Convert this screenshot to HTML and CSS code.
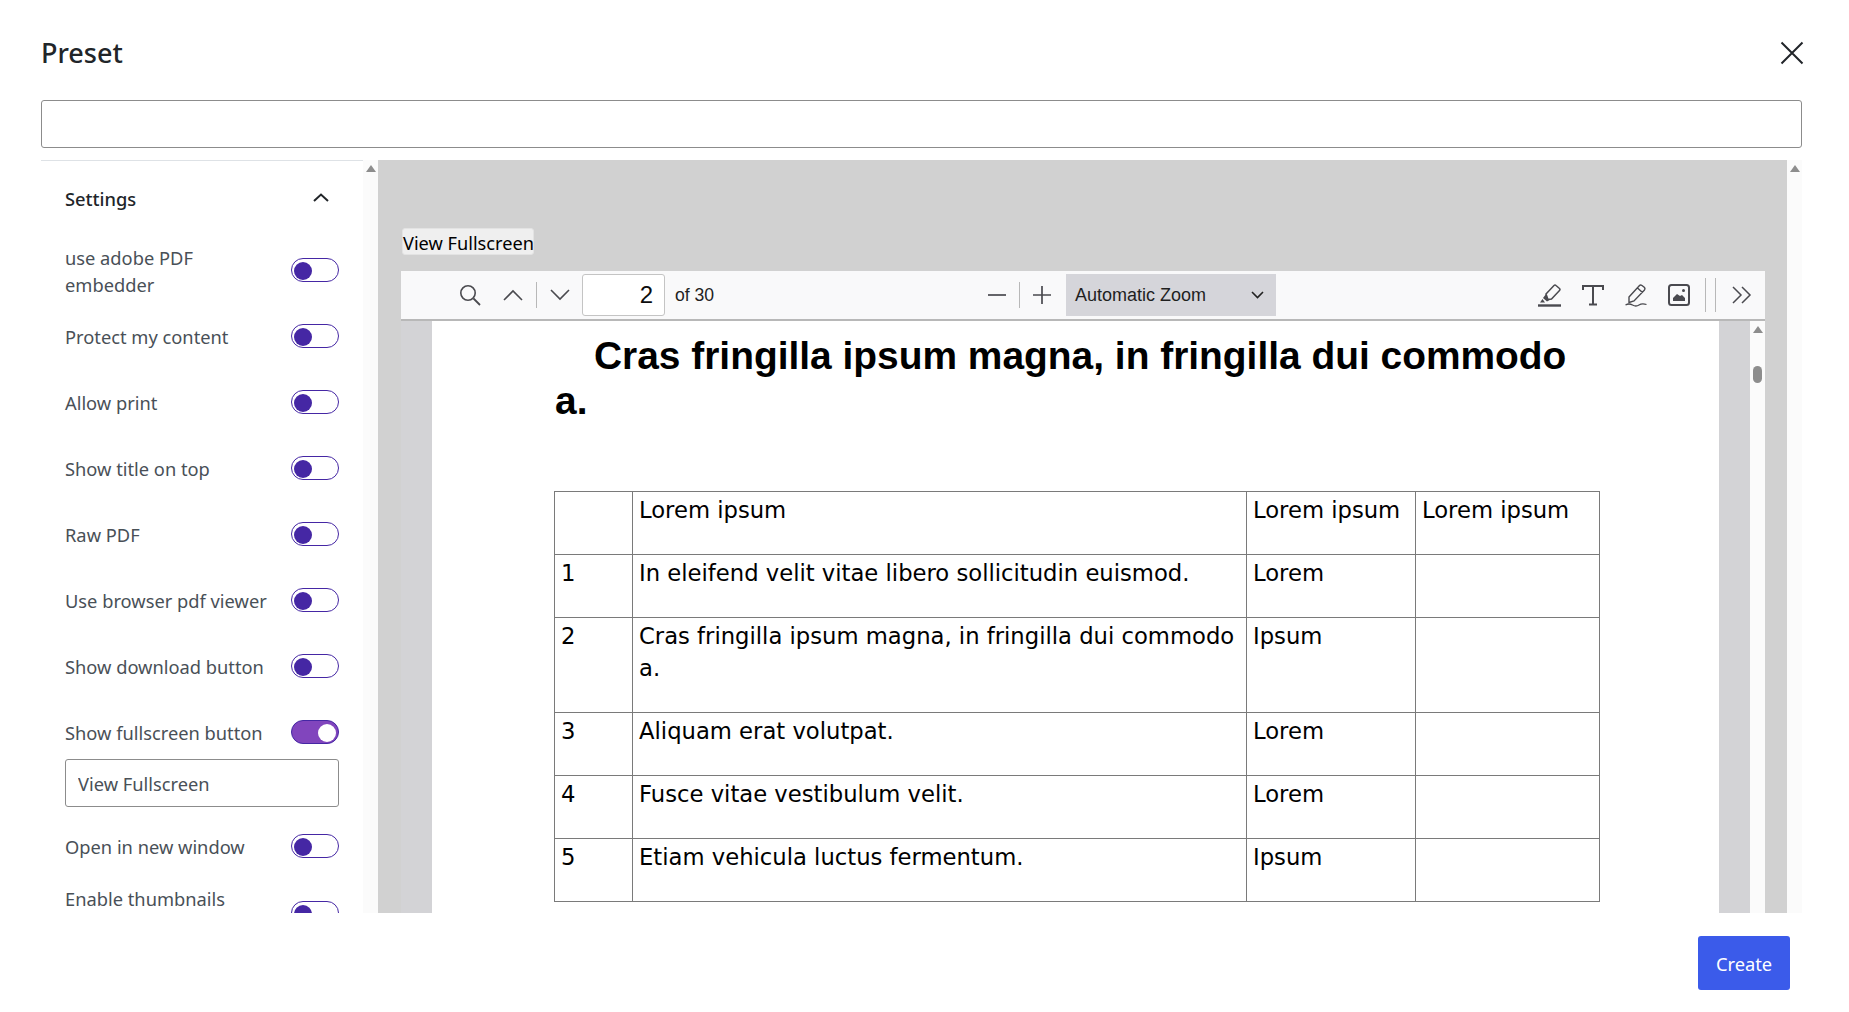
FILE: index.html
```html
<!DOCTYPE html>
<html lang="en">
<head>
    <meta charset="UTF-8">
    <title>Preset</title>
    <link rel="stylesheet" href="styles.css">
</head>
<body>
    <div id="modal">
        <div id="head">
            <h1>Preset</h1>
            <svg class="close" width="24" height="24" viewBox="0 0 24 24"><path d="M1.5 1.5 L22.5 22.5 M22.5 1.5 L1.5 22.5" stroke="#212529" stroke-width="2" fill="none"/></svg>
        </div>
        <input id="title" type="text">
        <div id="main">
            <div id="side">
                <div id="side-scroll">
                    <div id="settings-head">
                        <span>Settings</span>
                        <svg width="16" height="10" viewBox="0 0 16 10"><path d="M1 8 L8 1.5 L15 8" stroke="#212529" stroke-width="2" fill="none"/></svg>
                    </div>
                    <div class="row two"><label>use adobe PDF embedder</label><span class="toggle"></span></div>
                    <div class="row"><label>Protect my content</label><span class="toggle"></span></div>
                    <div class="row"><label>Allow print</label><span class="toggle"></span></div>
                    <div class="row"><label>Show title on top</label><span class="toggle"></span></div>
                    <div class="row"><label>Raw PDF</label><span class="toggle"></span></div>
                    <div class="row"><label>Use browser pdf viewer</label><span class="toggle"></span></div>
                    <div class="row"><label>Show download button</label><span class="toggle"></span></div>
                    <div class="row"><label>Show fullscreen button</label><span class="toggle on"></span></div>
                    <input class="text-input" type="text" value="View Fullscreen">
                    <div class="row"><label>Open in new window</label><span class="toggle"></span></div>
                    <div class="row last"><label>Enable thumbnails</label><span class="toggle"></span></div>
                </div>
                <div class="scrollbar"><i class="arrow"></i></div>
            </div>
            <div id="preview">
                <div id="preview-inner">
                    <button id="fullscreen">View Fullscreen</button>
                    <div id="viewer">
                        <div id="toolbar">
                            <svg class="tool search" width="24" height="24" viewBox="0 0 24 24"><circle cx="10" cy="10" r="7.2" stroke="#4a4a4f" stroke-width="1.6" fill="none"/><path d="M15.5 15.5 L22 22" stroke="#4a4a4f" stroke-width="1.8" fill="none"/></svg>
                            <svg class="tool up" width="20" height="12" viewBox="0 0 20 12"><path d="M1 11 L10 2 L19 11" stroke="#4a4a4f" stroke-width="1.6" fill="none"/></svg>
                            <span class="sep"></span>
                            <svg class="tool down" width="20" height="12" viewBox="0 0 20 12"><path d="M1 1 L10 10 L19 1" stroke="#4a4a4f" stroke-width="1.6" fill="none"/></svg>
                            <input id="page-no" type="text" value="2">
                            <span id="page-count">of 30</span>
                            <div class="zoom-group">
                                <svg width="18" height="18" viewBox="0 0 18 18"><path d="M0 9 H18" stroke="#4a4a4f" stroke-width="1.7"/></svg>
                                <span class="sep"></span>
                                <svg width="18" height="18" viewBox="0 0 18 18"><path d="M0 9 H18 M9 0 V18" stroke="#4a4a4f" stroke-width="1.7"/></svg>
                            </div>
                            <div id="zoom-select">
                                <span>Automatic Zoom</span>
                                <svg width="13" height="8" viewBox="0 0 13 8"><path d="M1 1 L6.5 6.5 L12 1" stroke="#222" stroke-width="1.6" fill="none"/></svg>
                            </div>
                            <div class="tools-right">
                                <svg width="23" height="24" viewBox="0 0 23 24"><path d="M8 11 L16 2.5 Q17 1.5 18 2.5 L21.5 5.5 Q22.5 6.5 21.5 7.5 L13.5 16 L10 16.5 Z" stroke="#4a4a4f" stroke-width="1.5" fill="none"/><path d="M8 11 L5 15 L9 18.5 L13.5 16 L10 16.5 Z M4.5 16 L2 19.5 H7 Z" fill="#4a4a4f"/><path d="M0 22.5 H23" stroke="#4a4a4f" stroke-width="2.4"/></svg>
                                <svg width="22" height="22" viewBox="0 0 22 22"><path d="M1 6 V2 H21 V6 M11 2 V20 M7 20.5 H15" stroke="#4a4a4f" stroke-width="2" fill="none"/></svg>
                                <svg width="22" height="24" viewBox="0 0 22 24"><path d="M4 14 L14.5 2.5 Q15.5 1.5 17 2.5 L19.5 4.5 Q20.5 6 19.5 7 L9 18 L4 19.5 Z M12.5 5 L17.5 9.5" stroke="#4a4a4f" stroke-width="1.4" fill="none"/><path d="M0.5 22 Q4 20 7.5 22 T14 22 T21.5 21.5" stroke="#4a4a4f" stroke-width="1.3" fill="none"/></svg>
                                <svg width="22" height="22" viewBox="0 0 22 22"><rect x="1" y="1" width="20" height="20" rx="2.5" stroke="#4a4a4f" stroke-width="2" fill="none"/><path d="M5 17 V14 L9 10 L12 12 L14 11 L17 14 V17 Z" fill="#4a4a4f"/><circle cx="15.5" cy="6.5" r="1.5" fill="#4a4a4f"/></svg>
                                <span class="sep tall"></span>
                                <span class="sep tall"></span>
                                <svg class="more" width="20" height="18" viewBox="0 0 20 18"><path d="M1 1 L9 9 L1 17 M10 1 L18 9 L10 17" stroke="#4a4a4f" stroke-width="1.5" fill="none"/></svg>
                            </div>
                        </div>
                        <div id="pages">
                            <div id="page">
                                <h2>Cras fringilla ipsum magna, in fringilla dui commodo a.</h2>
                                <table>
                                    <tr class="r63"><td class="c1"></td><td class="c2">Lorem ipsum</td><td class="c3">Lorem ipsum</td><td>Lorem ipsum</td></tr>
                                    <tr class="r63"><td>1</td><td>In eleifend velit vitae libero sollicitudin euismod.</td><td>Lorem</td><td></td></tr>
                                    <tr class="r95"><td>2</td><td>Cras fringilla ipsum magna, in fringilla dui commodo a.</td><td>Ipsum</td><td></td></tr>
                                    <tr class="r63"><td>3</td><td>Aliquam erat volutpat.</td><td>Lorem</td><td></td></tr>
                                    <tr class="r63"><td>4</td><td>Fusce vitae vestibulum velit.</td><td>Lorem</td><td></td></tr>
                                    <tr class="r63"><td>5</td><td>Etiam vehicula luctus fermentum.</td><td>Ipsum</td><td></td></tr>
                                </table>
                            </div>
                            <div class="scrollbar"><i class="arrow"></i><b class="thumb"></b></div>
                        </div>
                    </div>
                </div>
                <div class="scrollbar"><i class="arrow"></i></div>
            </div>
        </div>
        <div id="foot"><button id="create">Create</button></div>
    </div>
</body>
</html>
```

FILE: styles.css
```css
html, body { margin: 0; height: 100%; background: #fff; overflow: hidden; }
* { box-sizing: border-box; font-family: "Noto Sans", "Open Sans", sans-serif; }
#modal {
    width: 1849px;
    height: 1012px;
    padding: 0 47px 0 41px;
    display: flex;
    flex-flow: column;
}
#head {
    height: 100px;
    display: flex;
    justify-content: space-between;
    align-items: center;
    padding-top: 5px;
    margin-right: -2px;
}
#head h1 {
    margin: 0;
    font-size: 27px;
    font-weight: 500;
    color: #212529;
}
#title {
    display: block;
    width: 100%;
    height: 48px;
    border: 1px solid #8c8c8c;
    border-radius: 3px;
    background: #fff;
    flex: none;
}
#main {
    display: flex;
    height: 753px;
    margin-top: 12px;
    flex: none;
}
#side {
    width: 337px;
    flex: none;
    display: flex;
    overflow: hidden;
}
#side-scroll {
    width: 322px;
    border-top: 1px solid #dee2e6;
    padding: 0 24px;
    overflow: hidden;
}
.scrollbar {
    width: 15px;
    flex: none;
    background: #fbfbfb;
    position: relative;
}
.arrow {
    position: absolute;
    top: 5px;
    left: 3px;
    width: 0;
    height: 0;
    border-left: 5px solid transparent;
    border-right: 5px solid transparent;
    border-bottom: 7px solid #8d8d8d;
}
.thumb {
    position: absolute;
    top: 45px;
    left: 3px;
    width: 9px;
    height: 17px;
    border-radius: 5px;
    background: #8d8d8d;
}
#settings-head {
    height: 77px;
    display: flex;
    justify-content: space-between;
    align-items: center;
    padding: 0 10px 3px 0;
    font-size: 18.3px;
    font-weight: 500;
    color: #212529;
}
.row {
    height: 66px;
    display: flex;
    justify-content: space-between;
    align-items: center;
    font-size: 18.3px;
    line-height: 27px;
    color: #495057;
}
.row.two { height: 65px; }
.row.two .toggle { margin-top: -2px; }
.row.last { align-items: flex-start; }
.row.last label { margin-top: 6px; }
.row.last .toggle { margin-top: 22px; }
.row label { flex: 1; padding-right: 24px; }
.toggle {
    width: 48px;
    height: 24px;
    flex: none;
    border: 1px solid #4527a4;
    border-radius: 12px;
    background: #fff;
    position: relative;
}
.toggle::after {
    content: "";
    position: absolute;
    top: 3px;
    left: 2px;
    width: 18px;
    height: 18px;
    border-radius: 50%;
    background: #4527a4;
}
.toggle.on { background: #8145bd; }
.toggle.on::after { left: 26px; background: #fff; }
.text-input {
    display: block;
    width: 100%;
    height: 48px;
    margin: -6px 0 6px;
    padding: 0 12px;
    border: 1px solid #8c8c8c;
    border-radius: 3px;
    font-size: 18.3px;
    color: #495057;
    background: #fff;
}
#preview {
    flex: 1;
    display: flex;
    min-width: 0;
}
#preview-inner {
    flex: 1;
    background: #d1d1d1;
    padding: 68px 22px 0 23px;
    overflow: hidden;
}
#fullscreen {
    display: block;
    height: 27px;
    margin: 0 0 16px 1px;
    padding: 2px 0 0;
    width: 132px;
    border: 1px solid #e3e3e3;
    border-radius: 3px;
    background: #efefef;
    color: #000;
    font-size: 18.2px;
    line-height: 24px;
    white-space: nowrap;
}
#viewer { width: 1364px; }
#toolbar {
    height: 50px;
    background: #f9f9fa;
    border-bottom: 2px solid #b8b8b8;
    display: flex;
    align-items: center;
    padding-left: 57px;
    padding-right: 13px;
}
.tool { flex: none; }
.up { margin-left: 21px; }
.sep {
    display: block;
    width: 1px;
    height: 26px;
    background: #b8b8b8;
    flex: none;
}
#toolbar > .sep { margin: 0 13px; }
#page-no {
    width: 83px;
    height: 42px;
    margin-left: 12px;
    border: 1px solid #c4c4c4;
    border-radius: 3px;
    background: #fff;
    text-align: right;
    padding: 0 11px;
    font-size: 24px;
    font-family: "Liberation Sans", sans-serif;
    color: #0c0c0d;
    flex: none;
}
#page-count {
    margin-left: 10px;
    font-family: "Liberation Sans", sans-serif;
    font-size: 17.6px;
    color: #222;
    width: 313px;
    flex: none;
}
.zoom-group {
    display: flex;
    align-items: center;
    gap: 13px;
    width: 78px;
    flex: none;
}
#zoom-select {
    width: 210px;
    height: 42px;
    padding: 0 12px 0 9px;
    background: #d5d5da;
    display: flex;
    align-items: center;
    justify-content: space-between;
    flex: none;
}
#zoom-select span {
    font-family: "Liberation Sans", sans-serif;
    font-size: 18px;
    color: #1f1f1f;
}
.tools-right {
    margin-left: auto;
    display: flex;
    align-items: center;
    gap: 21px;
}
.sep.tall { height: 34px; margin-left: -6px; }
.sep.tall + .sep.tall { margin-left: -12px; }
.more { margin-left: -5px; }
#pages {
    height: 640px;
    display: flex;
    background: #d3d3d6;
    padding-left: 31px;
}
#page {
    width: 1287px;
    background: #fff;
    margin-right: 31px;
    padding: 12px 0 0 122px;
    overflow: hidden;
    flex: none;
}
#page h2 {
    margin: 0 0 0 1px;
    width: 1045px;
    text-indent: 39px;
    font-family: "Liberation Sans", sans-serif;
    font-size: 38.9px;
    line-height: 45px;
    font-weight: bold;
    color: #000;
}
#page table {
    margin-top: 68px;
    width: 1046px;
    border-collapse: collapse;
    table-layout: fixed;
}
#page td {
    border: 1px solid #7a7a7a;
    padding: 3px 5px 2px 6px;
    vertical-align: top;
    font-family: "DejaVu Sans", sans-serif;
    font-size: 22.7px;
    line-height: 31.5px;
    color: #000;
}
.r63 { height: 63px; }
.r95 { height: 95px; }
.c1 { width: 78px; }
.c2 { width: 614px; }
.c3 { width: 169px; }
#foot {
    display: flex;
    justify-content: flex-end;
    padding-top: 23px;
    padding-right: 12px;
}
#create {
    width: 92px;
    height: 54px;
    border: 0;
    border-radius: 3px;
    background: #3b5bea;
    color: #fff;
    font-size: 18.3px;
}
```
